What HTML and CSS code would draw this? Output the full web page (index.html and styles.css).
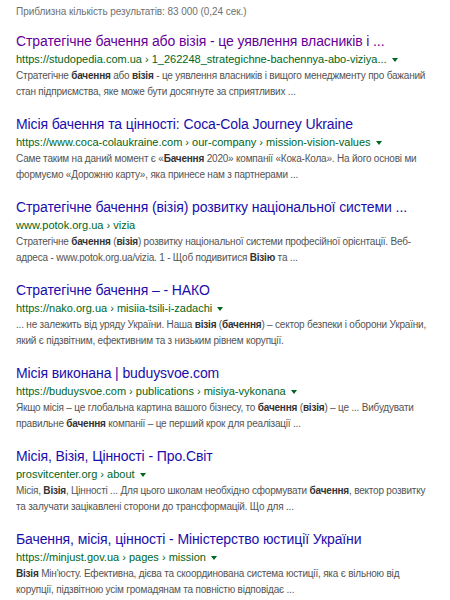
FILE: index.html
```html
<!DOCTYPE html>
<html lang="uk">
<head>
<meta charset="utf-8">
<link rel="stylesheet" href="styles.css">
</head>
<body>
<div class="page">
  <div class="stats">Приблизна кількість результатів: 83 000 (0,24 сек.)</div>

  <div class="result">
    <a class="title visited">Стратегічне бачення або візія - це уявлення власників і ...</a>
    <div class="url">https://studopedia.com.ua › 1_262248_strategichne-bachennya-abo-viziya... <span class="arrow"></span></div>
    <div class="snippet">Стратегічне <b>бачення</b> або <b>візія</b> - це уявлення власників і вищого менеджменту про бажаний<br>стан підприємства, яке може бути досягнуте за сприятливих ...</div>
  </div>

  <div class="result">
    <a class="title">Місія бачення та цінності: Coca-Cola Journey Ukraine</a>
    <div class="url">https://www.coca-colaukraine.com › our-company › mission-vision-values <span class="arrow"></span></div>
    <div class="snippet">Саме таким на даний момент є «<b>Бачення</b> 2020» компанії «Кока-Кола». На його основі ми<br>формуємо «Дорожню карту», яка принесе нам з партнерами ...</div>
  </div>

  <div class="result">
    <a class="title">Стратегічне бачення (візія) розвитку національної системи ...</a>
    <div class="url">www.potok.org.ua › vizia</div>
    <div class="snippet">Стратегічне <b>бачення</b> (<b>візія</b>) розвитку національної системи професійної орієнтації. Веб-<br>адреса - www.potok.org.ua/vizia. 1 - Щоб подивитися <b>Візію</b> та ...</div>
  </div>

  <div class="result">
    <a class="title">Стратегічне бачення – - НАКО</a>
    <div class="url">https://nako.org.ua › misiia-tsili-i-zadachi <span class="arrow"></span></div>
    <div class="snippet">... не залежить від уряду України. Наша <b>візія</b> (<b>бачення</b>) – сектор безпеки і оборони України,<br>який є підзвітним, ефективним та з низьким рівнем корупції.</div>
  </div>

  <div class="result">
    <a class="title">Місія виконана | buduysvoe.com</a>
    <div class="url">https://buduysvoe.com › publications › misiya-vykonana <span class="arrow"></span></div>
    <div class="snippet">Якщо місія – це глобальна картина вашого бізнесу, то <b>бачення</b> (<b>візія</b>) – це ... Вибудувати<br>правильне <b>бачення</b> компанії – це перший крок для реалізації ...</div>
  </div>

  <div class="result">
    <a class="title">Місія, Візія, Цінності - Про.Світ</a>
    <div class="url">prosvitcenter.org › about <span class="arrow"></span></div>
    <div class="snippet">Місія, <b>Візія</b>, Цінності ... Для цього школам необхідно сформувати <b>бачення</b>, вектор розвитку<br>та залучати зацікавлені сторони до трансформацій. Що для ...</div>
  </div>

  <div class="result">
    <a class="title">Бачення, місія, цінності - Міністерство юстиції України</a>
    <div class="url">https://minjust.gov.ua › pages › mission <span class="arrow"></span></div>
    <div class="snippet"><b>Візія</b> Мін'юсту. Ефективна, дієва та скоординована система юстиції, яка є вільною від<br>корупції, підзвітною усім громадянам та повністю відповідає ...</div>
  </div>
</div>
</body>
</html>
```

FILE: styles.css
```css
html, body {
  margin: 0;
  padding: 0;
  background: #ffffff;
}

.page {
  font-family: "Liberation Sans", Arial, sans-serif;
  padding: 4px 8px 0 16px;
}

.stats {
  font-size: 10px;
  letter-spacing: -0.05px;
  line-height: 16px;
  color: #707070;
  margin-bottom: 11px;
}

.result {
  margin-bottom: 14px;
}

.title {
  display: block;
  font-size: 14px;
  letter-spacing: -0.1px;
  line-height: 20px;
  color: #1a0dab;
  white-space: nowrap;
  text-decoration: none;
}

.title.visited {
  color: #660099;
}

.url {
  font-size: 11px;
  line-height: 17px;
  height: 17px;
  color: #006621;
  white-space: nowrap;
}

.arrow {
  display: inline-block;
  width: 0;
  height: 0;
  margin-left: 2px;
  border-left: 3px solid transparent;
  border-right: 3px solid transparent;
  border-top: 4px solid #006621;
  vertical-align: 1px;
}

.snippet {
  font-size: 10px;
  letter-spacing: -0.2px;
  line-height: 16px;
  color: #545454;
  white-space: nowrap;
}

.snippet b {
  color: #333333;
}
```
